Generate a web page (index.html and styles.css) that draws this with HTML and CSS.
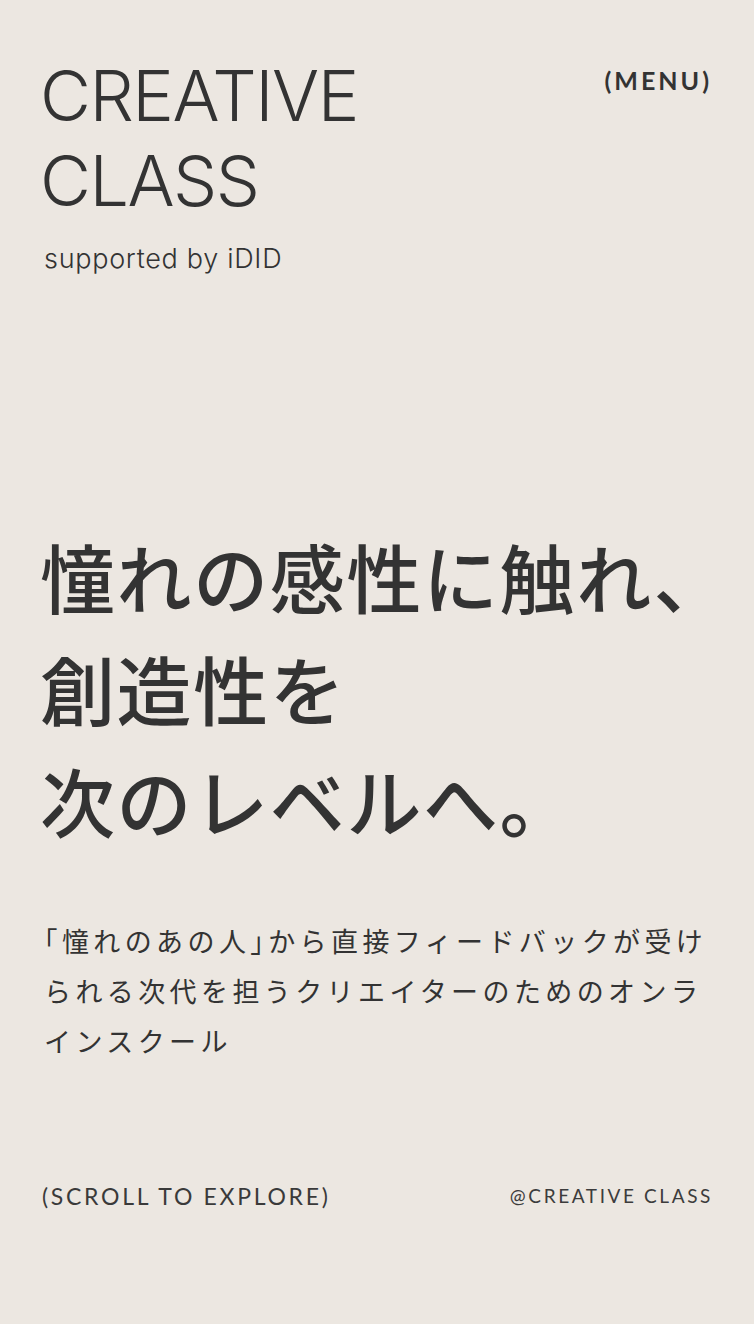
FILE: index.html
```html
<!DOCTYPE html>
<html lang="ja">
<head>
<meta charset="utf-8">
<title>CREATIVE CLASS</title>
<link rel="stylesheet" href="styles.css">
</head>
<body>
<div class="page">
  <header class="top">
    <div class="brand">
      <div class="logo">CREATIVE<br>CLASS</div>
      <div class="support">supported by iDID</div>
    </div>
    <a class="menu" href="#">(MENU)</a>
  </header>
  <section class="hero">
    <h1 class="title">憧れの感性に触れ、<br>創造性を<br>次のレベルへ。</h1>
    <p class="lead">「憧れのあの人」から直接フィードバックが受けられる次代を担うクリエイターのためのオンラインスクール</p>
  </section>
  <footer class="bottom">
    <span class="scroll">(SCROLL TO EXPLORE)</span>
    <span class="credit">@CREATIVE CLASS</span>
  </footer>
</div>
</body>
</html>
```
FILE: styles.css
```css
html, body {
  margin: 0;
  padding: 0;
  background: #ece7e1;
}
body {
  color: #333333;
  font-family: "Noto Sans CJK JP", sans-serif;
}
.page {
  width: 754px;
  height: 1324px;
  box-sizing: border-box;
  padding: 0 43px 0 40px;
  display: flex;
  flex-direction: column;
}
.top {
  display: flex;
  justify-content: space-between;
  align-items: flex-start;
  padding-top: 53px;
}
.logo {
  font-family: Inter, "Liberation Sans", sans-serif;
  font-weight: 300;
  font-size: 70px;
  line-height: 85px;
  letter-spacing: -1.5px;
}
.support {
  font-family: Inter, "Liberation Sans", sans-serif;
  font-weight: 300;
  font-size: 27px;
  line-height: 32px;
  margin-top: 20px;
  padding-left: 4px;
  letter-spacing: 0.7px;
}
.menu {
  font-family: Lato, sans-serif;
  font-weight: 700;
  font-size: 25px;
  letter-spacing: 3px;
  color: #333333;
  text-decoration: none;
  line-height: 30px;
  margin-top: 12px;
  margin-right: -1px;
}
.hero {
  margin-top: 245px;
}
.title {
  margin: 0;
  font-family: "Noto Sans CJK JP", sans-serif;
  font-weight: 500;
  font-size: 75px;
  line-height: 112px;
  letter-spacing: 1.6px;
  white-space: nowrap;
}
.lead {
  margin: 60px -10px 0 0;
  padding-left: 4px;
  font-family: "Noto Sans CJK JP", sans-serif;
  font-weight: 400;
  font-size: 27px;
  line-height: 50px;
  letter-spacing: 4.4px;
  font-feature-settings: "halt";
}
.bottom {
  display: flex;
  justify-content: space-between;
  align-items: center;
  margin-top: 115px;
  font-family: Lato, sans-serif;
  line-height: 30px;
}
.scroll {
  font-size: 23px;
  font-weight: 400;
  letter-spacing: 2.7px;
  padding-left: 2px;
  color: #3a3a3a;
}
.credit {
  font-size: 19px;
  font-weight: 400;
  letter-spacing: 2.6px;
  color: #3c3c3c;
  margin-right: -2px;
}
```
